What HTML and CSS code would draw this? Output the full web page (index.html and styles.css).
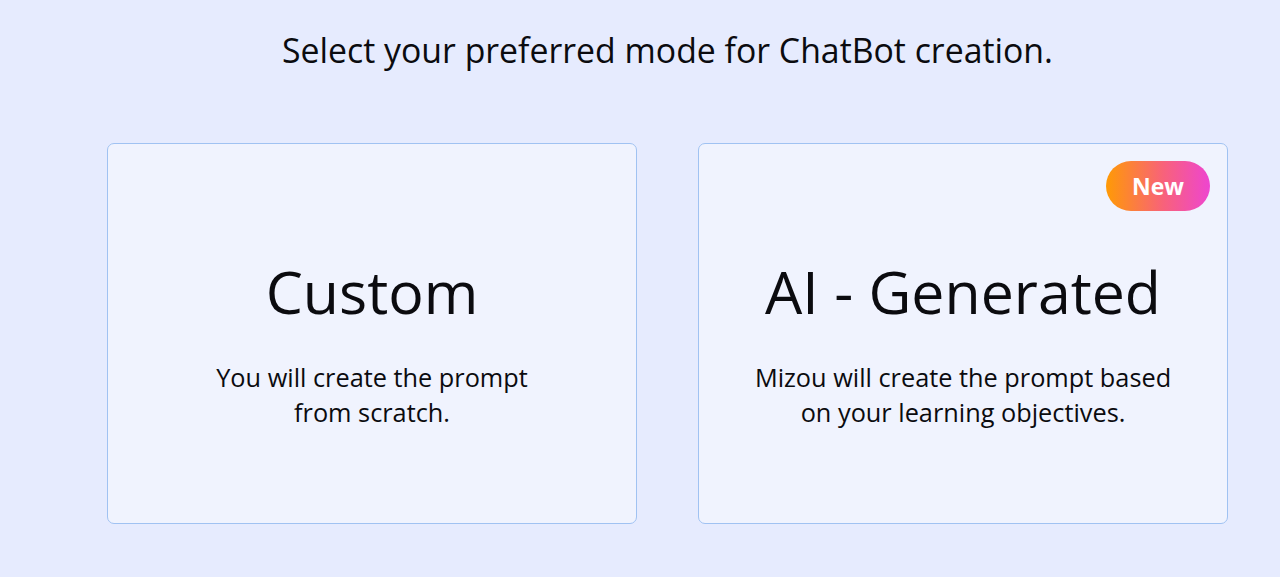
FILE: index.html
```html
<!DOCTYPE html>
<html lang="en">
<head>
    <meta charset="UTF-8">
    <meta name="viewport" content="width=device-width, initial-scale=1.0">
    <title>Create ChatBot</title>
    <link rel="stylesheet" href="styles.css">
</head>
<body>
    <main class="page">
        <h2 class="page-title">Select your preferred mode for ChatBot creation.</h2>

        <div class="modes">
            <div class="mode-card">
                <h1 class="mode-name">Custom</h1>
                <p class="mode-desc">You will create the prompt<br>from scratch.</p>
            </div>
            <div class="mode-card">
                <span class="badge-new">New</span>
                <h1 class="mode-name">AI - Generated</h1>
                <p class="mode-desc">Mizou will create the prompt based<br>on your learning objectives.</p>
            </div>
        </div>
    </main>
</body>
</html>
```

FILE: styles.css
```css
body {
    margin: 0;
    background-color: #e6ebfe;
    font-family: "Open Sans", "Noto Sans", sans-serif;
    color: #0b0b0f;
}
.page {
    padding: 30px 0 0 55px;
}
.page-title {
    margin: 0;
    text-align: center;
    font-size: 33.8px;
    font-weight: 400;
    line-height: 40px;
}
.modes {
    display: flex;
    justify-content: center;
    gap: 61px;
    margin-top: 73px;
}
.mode-card {
    position: relative;
    box-sizing: border-box;
    width: 530px;
    height: 381px;
    background: #f0f3fe;
    border: 1.5px solid #a0c2f2;
    border-radius: 7px;
    display: flex;
    flex-direction: column;
    align-items: center;
    padding-top: 112px;
    text-align: center;
}
.mode-name {
    margin: 0;
    font-size: 59px;
    font-weight: 400;
    line-height: 70px;
}
.mode-desc {
    margin: 34px 0 0;
    font-size: 25.3px;
    line-height: 35px;
}
.badge-new {
    position: absolute;
    top: 17px;
    right: 17px;
    width: 104px;
    height: 50px;
    border-radius: 25px;
    background: linear-gradient(90deg, #ff9a05 0%, #f8627a 55%, #ee45d0 100%);
    color: #fff;
    font-size: 23px;
    font-weight: 700;
    line-height: 50px;
}
```
